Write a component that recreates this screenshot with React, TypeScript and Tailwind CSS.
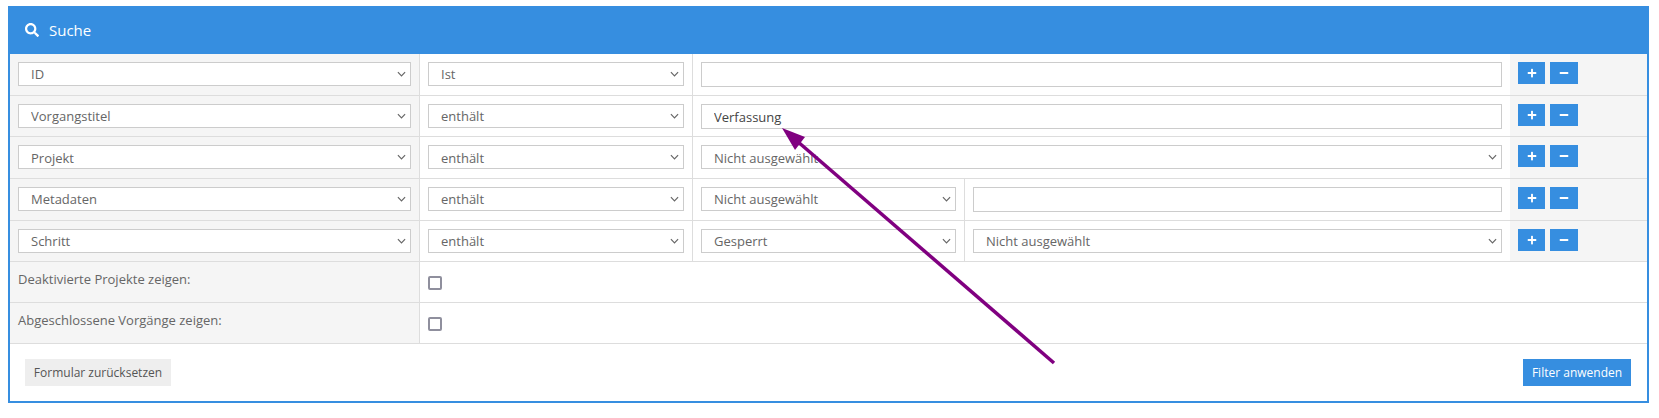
import { FaSearch, FaPlus, FaMinus } from 'react-icons/fa'

const FONT = "font-['Open_Sans',sans-serif]"

function Select({ value, className = '' }: { value: string; className?: string }) {
  return (
    <div className={`relative h-[24px] ${className}`}>
      <select
        defaultValue={value}
        className="block h-full w-full appearance-none rounded-none border border-[#ccc] bg-white pl-3 pr-6 pt-[2px] text-[13px] text-[#666] outline-none"
      >
        <option>{value}</option>
      </select>
      <svg
        viewBox="0 0 10 6"
        className="pointer-events-none absolute right-[5px] top-[9px] h-[6px] w-[9px] text-[#666]"
        fill="none"
        stroke="currentColor"
        strokeWidth="1.3"
      >
        <path d="M1 1l4 4 4-4" />
      </svg>
    </div>
  )
}

function TextInput({ value = '' }: { value?: string }) {
  return (
    <input
      defaultValue={value}
      className="block h-[25px] w-full rounded-none border border-[#ccc] bg-white px-3 pt-[2px] text-[13px] text-[#444] outline-none"
    />
  )
}

function Actions() {
  return (
    <div className="flex h-full w-[137px] gap-[5px] bg-[#f5f5f5] pl-2 pt-2">
      <button className="flex h-[22px] w-[27px] items-center justify-center bg-[#368ee0] text-[10px] text-white">
        <FaPlus />
      </button>
      <button className="flex h-[22px] w-[28px] items-center justify-center bg-[#368ee0] text-[10px] text-white">
        <FaMinus />
      </button>
    </div>
  )
}

function Row({ first, second, children }: { first: string; second: string; children: React.ReactNode }) {
  return (
    <div className="flex h-[41.67px] border-b border-[#ddd]">
      <div className="h-full w-[410px] border-r border-[#ddd] bg-[#f5f5f5] pl-2 pr-2 pt-2">
        <Select value={first} />
      </div>
      <div className="h-full w-[273px] border-r border-[#ddd] pl-2 pr-2 pt-2">
        <Select value={second} />
      </div>
      {children}
      <Actions />
    </div>
  )
}

function Cell({ className = '', children }: { className?: string; children: React.ReactNode }) {
  return <div className={`h-full pl-2 pr-2 pt-2 ${className}`}>{children}</div>
}

function CheckRow({ label }: { label: string }) {
  return (
    <div className="flex h-[41px] border-b border-[#ddd]">
      <div className="h-full w-[410px] border-r border-[#ddd] bg-[#f5f5f5] pl-2 pt-2 text-[13px] text-[#666]">{label}</div>
      <div className="pl-2 pt-[14px]">
        <input type="checkbox" className="block h-[14px] w-[14px] appearance-none rounded-[2px] border-2 border-[#8f8f9d] bg-white" />
      </div>
    </div>
  )
}

export default function App() {
  return (
    <div className={`relative bg-white px-2 pt-[6px] ${FONT}`}>
      <div className="h-[397px] w-[1641px] border-2 border-t-0 border-[#368ee0]">
        <div className="-mx-[2px] flex h-[48px] items-center gap-[10px] bg-[#368ee0] pl-[17px] text-[15px] text-white">
          <FaSearch className="text-[14px]" />
          <span>Suche</span>
        </div>

        <Row first="ID" second="Ist">
          <Cell className="w-[817px]">
            <TextInput />
          </Cell>
        </Row>
        <Row first="Vorgangstitel" second="enthält">
          <Cell className="w-[817px]">
            <TextInput value="Verfassung" />
          </Cell>
        </Row>
        <Row first="Projekt" second="enthält">
          <Cell className="w-[817px]">
            <Select value="Nicht ausgewählt" />
          </Cell>
        </Row>
        <Row first="Metadaten" second="enthält">
          <Cell className="w-[272px] border-r border-[#ddd]">
            <Select value="Nicht ausgewählt" />
          </Cell>
          <Cell className="w-[545px]">
            <TextInput />
          </Cell>
        </Row>
        <Row first="Schritt" second="enthält">
          <Cell className="w-[272px] border-r border-[#ddd]">
            <Select value="Gesperrt" />
          </Cell>
          <Cell className="w-[545px]">
            <Select value="Nicht ausgewählt" />
          </Cell>
        </Row>

        <CheckRow label="Deaktivierte Projekte zeigen:" />
        <CheckRow label="Abgeschlossene Vorgänge zeigen:" />

        <div className="flex items-start justify-between pl-[15px] pr-[16px] pt-[15px]">
          <button className="h-[27px] w-[146px] bg-[#eee] text-[12px] text-[#555]">Formular zurücksetzen</button>
          <button className="h-[27px] w-[108px] bg-[#368ee0] text-[12px] text-white">Filter anwenden</button>
        </div>
      </div>

      {/* annotation arrow drawn over the form */}
      <svg className="pointer-events-none absolute left-0 top-0 h-[418px] w-[1659px]" viewBox="0 0 1659 418">
        <line x1="1054" y1="363" x2="797" y2="141" stroke="#800080" strokeWidth="3.5" />
        <polygon points="782,128 805,137 795,150" fill="#800080" />
      </svg>
    </div>
  )
}
